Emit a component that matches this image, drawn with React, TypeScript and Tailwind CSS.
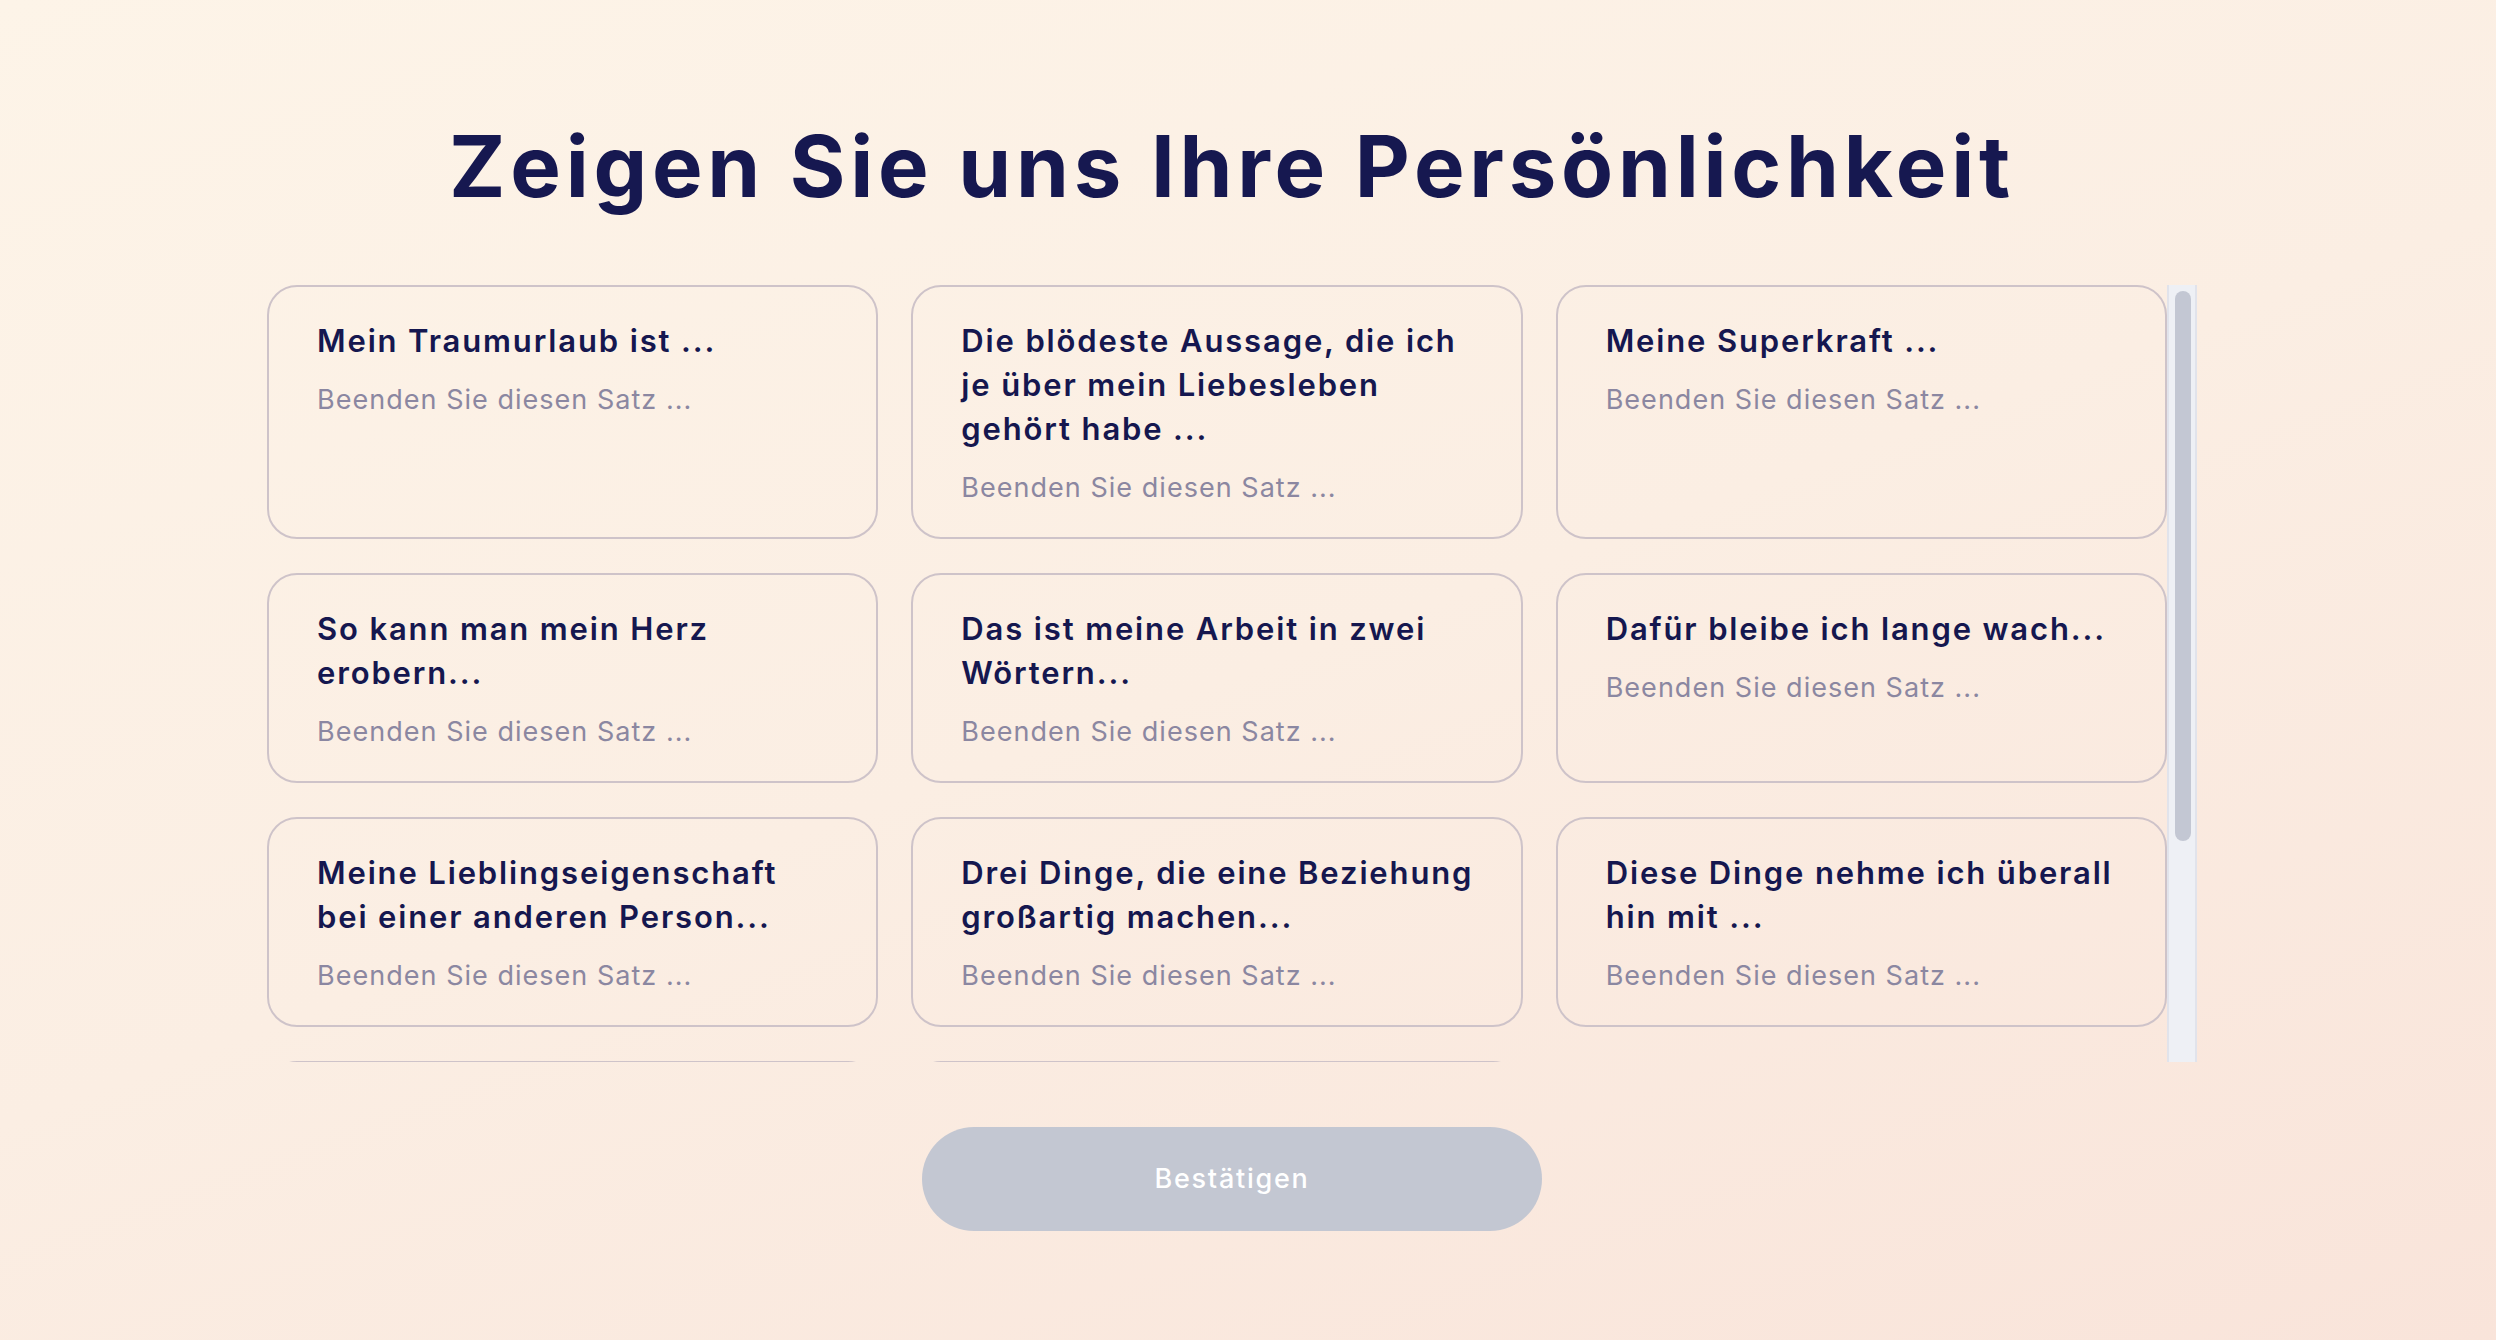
type Card = { lines: string[] };

const cards: Card[] = [
  { lines: ["Mein Traumurlaub ist ..."] },
  { lines: ["Die blödeste Aussage, die ich", "je über mein Liebesleben", "gehört habe ..."] },
  { lines: ["Meine Superkraft ..."] },
  { lines: ["So kann man mein Herz", "erobern..."] },
  { lines: ["Das ist meine Arbeit in zwei", "Wörtern..."] },
  { lines: ["Dafür bleibe ich lange wach..."] },
  { lines: ["Meine Lieblingseigenschaft", "bei einer anderen Person..."] },
  { lines: ["Drei Dinge, die eine Beziehung", "großartig machen..."] },
  { lines: ["Diese Dinge nehme ich überall", "hin mit ..."] },
  { lines: ["Mein Lieblingsessen ist ..."] },
  { lines: ["Am Sonntagmorgen findet", "man mich ..."] },
];

function PromptCard({ card }: { card: Card }) {
  return (
    <div className="rounded-[30px] border-2 border-[#cec3c9] pt-[32px] pb-[29px] px-[48px] flex flex-col">
      <h3 className="text-[31px] leading-[44px] font-semibold text-[#15174f] tracking-[0.06em]">
        {card.lines.map((l, i) => (
          <span key={i} className="block whitespace-nowrap">
            {l}
          </span>
        ))}
      </h3>
      <p className="mt-[17px] text-[27px] leading-[40px] text-[#8b87a1] tracking-[0.038em]">
        Beenden Sie diesen Satz ...
      </p>
    </div>
  );
}

export default function App() {
  return (
    <div className="min-h-screen w-full bg-[linear-gradient(160deg,#fdf4e8_0%,#fbeee3_50%,#f9e4da_100%)] font-[Inter,sans-serif] pr-[32px] pt-[124px]">
      <h1 className="text-center text-[85px] leading-none font-bold text-[#161850] tracking-[0.056em]">
        Zeigen Sie uns Ihre Persönlichkeit
      </h1>
      <div className="mx-auto mt-[76px] w-[1930px] h-[777px] flex">
        <div className="w-[1900px] h-full overflow-hidden">
          <div className="grid grid-cols-3 gap-x-[33px] gap-y-[34px]">
            {cards.map((c, i) => (
              <PromptCard key={i} card={c} />
            ))}
          </div>
        </div>
        <div className="w-[30px] h-full bg-[#eef0f5] border-x-2 border-[#e1e3eb] pt-[6px] pl-[6px]">
          <div className="w-[16px] h-[550px] rounded-full bg-[#c3c7d3]" />
        </div>
      </div>
      <div className="flex justify-center mt-[65px]">
        <button className="w-[620px] h-[104px] rounded-full bg-[#c3c7d2] text-white text-[27px] font-medium tracking-[0.064em]">
          Bestätigen
        </button>
      </div>
    </div>
  );
}
